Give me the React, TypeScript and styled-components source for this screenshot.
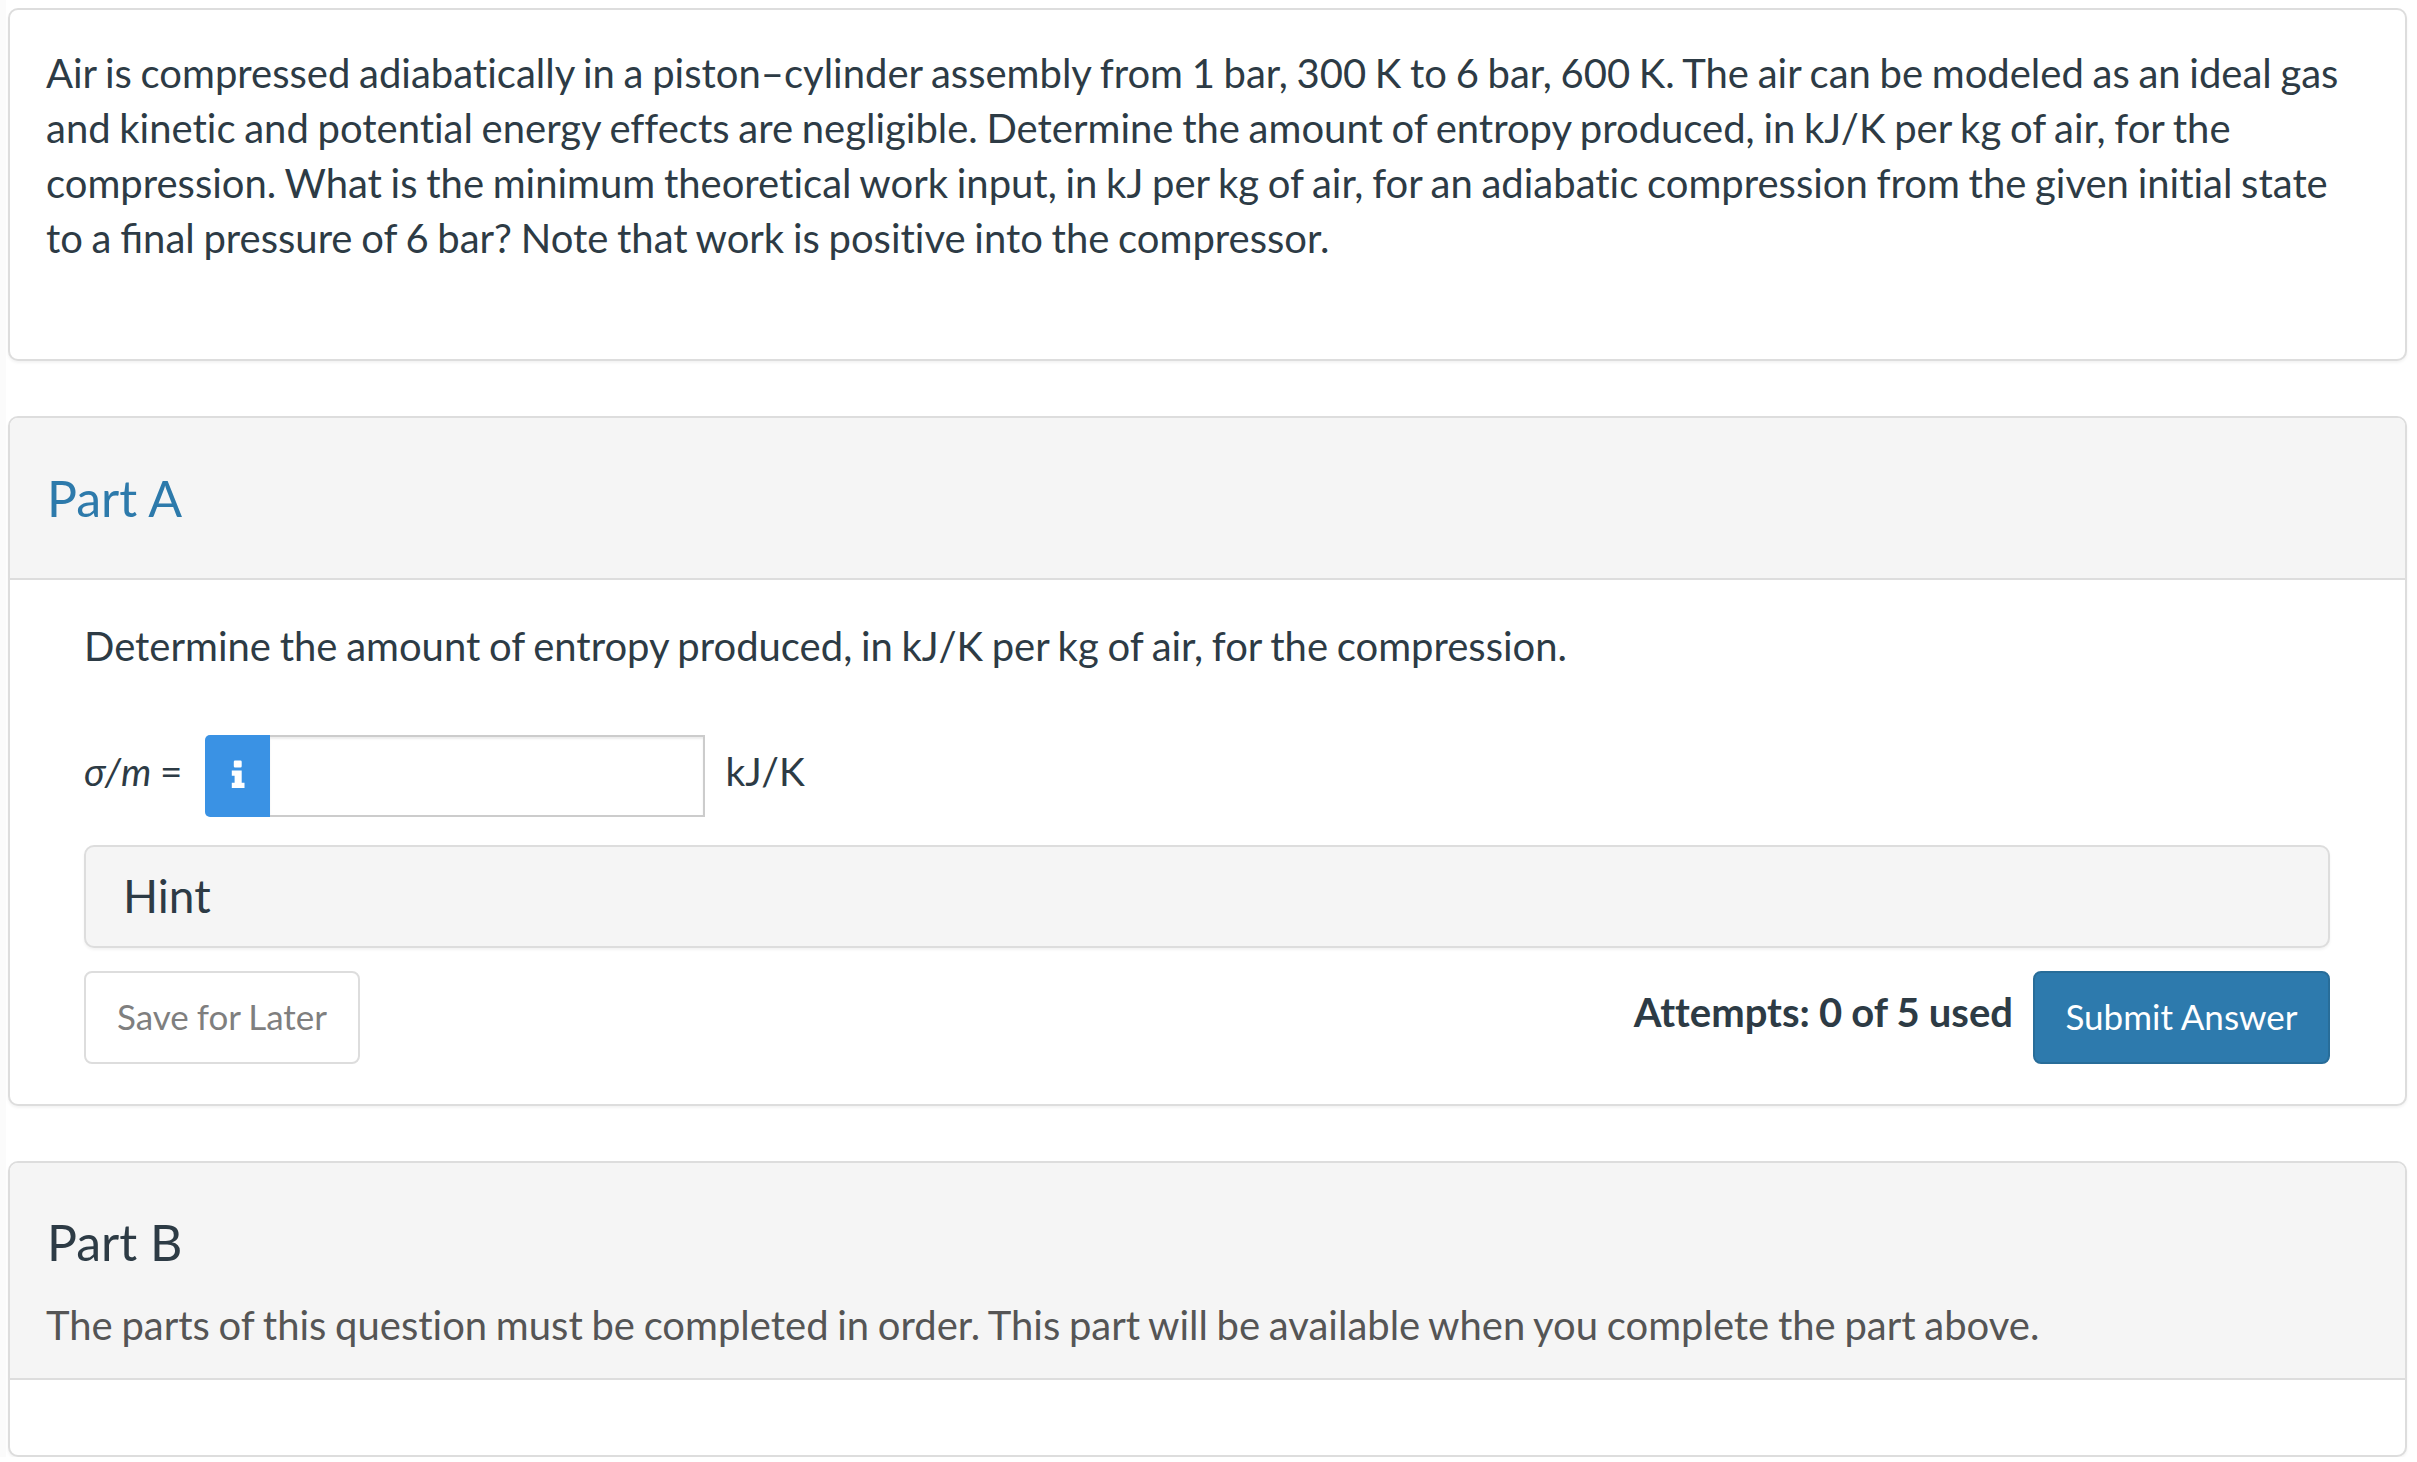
import React from 'react'
import styled, { createGlobalStyle } from 'styled-components'

const Global = createGlobalStyle`
  html, body {
    margin: 0;
    background: #fff;
  }
  body {
    font-family: Lato, "Open Sans", sans-serif;
    font-size: 40px;
    font-variant-ligatures: none;
    word-spacing: -1.55px;
    line-height: 55px;
    color: #2d3b45;
  }
`

export default function App() {
  return (
    <Page>
      <Global />
      <IntroCard>
        Air is compressed adiabatically in a piston–cylinder assembly from 1 bar, 300 K to 6 bar, 600 K. The air can be
        modeled as an ideal gas and kinetic and potential energy effects are negligible. Determine the amount of entropy
        produced, in kJ/K per kg of air, for the compression. What is the minimum theoretical work input, in kJ per kg of
        air, for an adiabatic compression from the given initial state to a ﬁnal pressure of 6 bar? Note that work is
        positive into the compressor.
      </IntroCard>

      <PartCard>
        <PartAHeader>
          <PartLink>Part A</PartLink>
        </PartAHeader>
        <PartABody>
          <Question>Determine the amount of entropy produced, in kJ/K per kg of air, for the compression.</Question>
          <AnswerRow>
            <Variable>
              <i>σ/m</i> =
            </Variable>
            <InfoTag>
              <InfoIcon viewBox="0 0 14 28" aria-hidden="true">
                <path d="M4 0.5h5.5a1.2 1.2 0 0 1 1.2 1.2v4.6a1.2 1.2 0 0 1-1.2 1.2H4a1.2 1.2 0 0 1-1.2-1.2V1.700a1.2 1.2 0 0 1 1.2-1.2z" />
                <path d="M0.800 10.500h9.900v12.300H13.500V28H0.800v-5.200h2.800v-7.100H0.800z" />
              </InfoIcon>
            </InfoTag>
            <AnswerInput aria-label="answer" />
            <Unit>kJ/K</Unit>
          </AnswerRow>
          <HintBox>Hint</HintBox>
          <ActionRow>
            <SaveButton>Save for Later</SaveButton>
            <Attempts>Attempts: 0 of 5 used</Attempts>
            <SubmitButton>Submit Answer</SubmitButton>
          </ActionRow>
        </PartABody>
      </PartCard>

      <PartCard>
        <PartBHeader>
          <PartTitle>Part B</PartTitle>
          <PartNote>
            The parts of this question must be completed in order. This part will be available when you complete the part
            above.
          </PartNote>
        </PartBHeader>
        <EmptyBody />
      </PartCard>
    </Page>
  )
}

const Page = styled.div`
  display: flex;
  flex-direction: column;
  gap: 55px;
  padding: 8px 10px 0 2px;
  border-left: 6px solid #fbfbfb;
`

const IntroCard = styled.div`
  box-sizing: border-box;
  height: 353px;
  padding: 36px 55px 0 36px;
  background: #fff;
  border: 2px solid #ddd;
  border-radius: 10px;
  box-shadow: 0 2px 3px rgba(0, 0, 0, 0.05);
`

const PartCard = styled.div`
  background: #fff;
  border: 2px solid #ddd;
  border-radius: 10px;
  box-shadow: 0 2px 3px rgba(0, 0, 0, 0.05);
  overflow: hidden;
`

const PartAHeader = styled.div`
  box-sizing: border-box;
  height: 162px;
  padding: 0 37px;
  display: flex;
  align-items: center;
  background: #f5f5f5;
  border-bottom: 2px solid #ddd;
`

const PartLink = styled.a`
  font-size: 50px;
  line-height: 60px;
  word-spacing: 0;
  color: #2d7aab;
`

const PartABody = styled.div`
  box-sizing: border-box;
  height: 524px;
  padding: 39px 75px 0 74px;
`

const Question = styled.p`
  margin: 0 0 61px;
`

const AnswerRow = styled.div`
  display: flex;
  align-items: center;
  height: 82px;
  margin-bottom: 28px;
`

const Variable = styled.span`
  margin: 0 22px 10px 0;
  font-size: 38.5px;
  word-spacing: -1px;
`

const InfoTag = styled.span`
  box-sizing: border-box;
  width: 65px;
  height: 82px;
  margin-left: 1px;
  display: flex;
  align-items: center;
  justify-content: center;
  background: #3a92e4;
  border-radius: 5px 0 0 5px;
`

const InfoIcon = styled.svg`
  width: 14px;
  height: 28px;
  margin-bottom: 4px;
  fill: #fff;
`

const AnswerInput = styled.input`
  box-sizing: border-box;
  width: 435px;
  height: 82px;
  padding: 0;
  border: 2px solid #ccc;
  border-left: none;
  background: #fff;
  outline: none;
  box-shadow: inset 0 2px 2px rgba(0, 0, 0, 0.075);
`

const Unit = styled.span`
  margin: 0 0 10px 20px;
  font-size: 39px;
`

const HintBox = styled.div`
  box-sizing: border-box;
  height: 103px;
  padding: 0 37px 2px;
  display: flex;
  align-items: center;
  font-size: 46px;
  background: #f5f5f5;
  border: 2px solid #ddd;
  border-radius: 10px;
  box-shadow: 0 2px 3px rgba(0, 0, 0, 0.05);
  margin-bottom: 23px;
`

const ActionRow = styled.div`
  display: flex;
  align-items: flex-start;
`

const SaveButton = styled.button`
  box-sizing: border-box;
  width: 276px;
  height: 93px;
  padding: 0 0 2px;
  font: inherit;
  font-size: 35px;
  word-spacing: -1px;
  color: #7f7f7f;
  background: #fff;
  border: 2px solid #ddd;
  border-radius: 8px;
`

const Attempts = styled.span`
  margin-left: auto;
  margin-right: 20px;
  margin-top: 14px;
  font-weight: 700;
  word-spacing: -0.6px;
  line-height: 55px;
`

const SubmitButton = styled.button`
  box-sizing: border-box;
  width: 297px;
  height: 93px;
  padding: 0 0 2px;
  font: inherit;
  font-size: 35px;
  word-spacing: 0;
  color: #fff;
  background: #2d7aad;
  border: 2px solid #286d99;
  border-radius: 8px;
`

const PartBHeader = styled.div`
  box-sizing: border-box;
  height: 217px;
  padding: 49px 37px 0;
  background: #f5f5f5;
  border-bottom: 2px solid #ddd;
`

const PartTitle = styled.div`
  font-size: 50px;
  line-height: 60px;
  word-spacing: 0;
  margin-bottom: 26px;
`

const PartNote = styled.div`
  margin-left: -1px;
  color: #555;
`

const EmptyBody = styled.div`
  height: 75px;
`
